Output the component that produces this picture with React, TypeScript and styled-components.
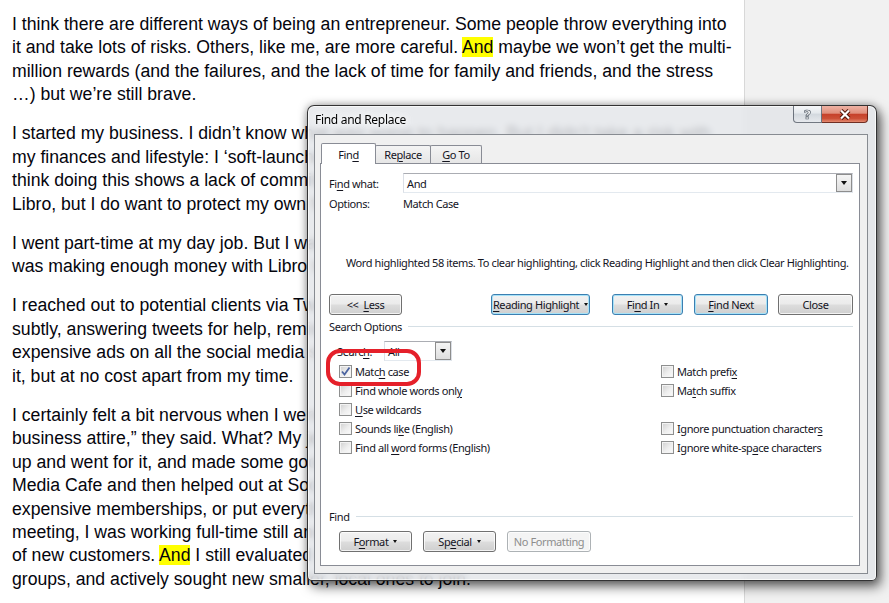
import styled, { createGlobalStyle } from 'styled-components';

const GlobalStyle = createGlobalStyle`
  html, body {
    margin: 0;
    padding: 0;
    background: #f1f1f1;
  }
  * {
    box-sizing: border-box;
  }
`;

const UI_FONT = `"Noto Sans", "Open Sans", sans-serif`;

// document behind the dialog

const Screen = styled.div`
  position: relative;
  width: 889px;
  height: 603px;
  overflow: hidden;
  display: flex;
  background: #f1f1f1;
`;

const Page = styled.div`
  width: 745px;
  flex: none;
  background: #fff;
  border-right: 1px solid #d8d8d8;
  padding: 13px 0 0 12px;
  overflow: hidden;
  font-family: "Liberation Sans", Arial, sans-serif;
  font-size: 17.65px;
  line-height: 23.4px;
  color: #05050d;
`;

const Paragraph = styled.p`
  margin: 0 0 15.8px;
`;

const Line = styled.span`
  display: block;
  white-space: nowrap;
`;

const Highlight = styled.span`
  background: #ffff00;
`;

// dialog window

const Window = styled.div`
  position: absolute;
  left: 307px;
  top: 105px;
  width: 570px;
  height: 476px;
  display: flex;
  flex-direction: column;
  padding: 0 8px 6px 6px;
  border: 1px solid rgba(20, 20, 20, 0.85);
  border-radius: 7px 7px 5px 5px;
  background: rgba(226, 229, 233, 0.8);
  backdrop-filter: blur(3px);
  box-shadow: inset 0 0 0 1px rgba(255, 255, 255, 0.7), 0 0 10px rgba(0, 0, 0, 0.35),
    4px 6px 12px rgba(0, 0, 0, 0.55);
  font-family: ${UI_FONT};
  font-size: 11px;
  letter-spacing: -0.4px;
  color: #14141e;
`;

const TitleBar = styled.div`
  height: 28px;
  flex: none;
  display: flex;
  align-items: flex-start;
`;

const Title = styled.div`
  margin: 6px 0 0 1px;
  font-size: 12px;
  letter-spacing: -0.3px;
  line-height: 16px;
  color: #000;
  text-shadow: 0 0 6px #fff, 0 0 10px #fff;
`;

const CaptionButtons = styled.div`
  margin-left: auto;
  display: flex;
`;

const HelpButton = styled.div`
  width: 29px;
  height: 17px;
  display: flex;
  align-items: center;
  justify-content: center;
  border: 1px solid rgba(70, 78, 90, 0.75);
  border-top: none;
  border-radius: 0 0 0 4px;
  background: linear-gradient(#f6f7f9 0%, #e4e8ec 45%, #d2d8de 50%, #e6e9ed 100%);
  font-family: "DejaVu Sans", sans-serif;
  font-size: 13px;
  font-weight: bold;
  letter-spacing: 0;
  color: #f4f4f4;
  -webkit-text-stroke: 0.7px #5a636e;
`;

const CloseButton = styled.div`
  width: 46px;
  height: 17px;
  display: flex;
  align-items: center;
  justify-content: center;
  border: 1px solid rgba(90, 25, 15, 0.85);
  border-top: none;
  border-left: none;
  border-radius: 0 0 4px 0;
  background: linear-gradient(#eeb2a4 0%, #e08f7c 45%, #c6412a 52%, #cc4f36 78%, #e48a70 100%);
`;

const Client = styled.div`
  flex: 1;
  display: flex;
  flex-direction: column;
  padding: 8px 7px 7px 5px;
  background: #f0f0f0;
  border: 1px solid rgba(90, 96, 104, 0.7);
`;

const Tabs = styled.div`
  height: 20px;
  display: flex;
  align-items: flex-end;
  padding-left: 1px;
  position: relative;
  z-index: 1;
`;

const Tab = styled.div<{ $active?: boolean; $w: number }>`
  width: ${({ $w }) => $w}px;
  height: ${({ $active }) => ($active ? 21 : 18)}px;
  margin-bottom: ${({ $active }) => ($active ? -1 : 0)}px;
  margin-left: ${({ $active }) => ($active ? 0 : -1)}px;
  padding-top: ${({ $active }) => ($active ? 1 : 0)}px;
  display: flex;
  align-items: center;
  justify-content: center;
  border: 1px solid #898c95;
  border-bottom: none;
  border-radius: 2px 2px 0 0;
  background: ${({ $active }) => ($active ? '#fff' : 'linear-gradient(#f4f4f4, #e6e6e6)')};
`;

const Panel = styled.div`
  flex: 1;
  display: flex;
  flex-direction: column;
  padding: 9px 6px 13px 8px;
  background: #fff;
  border: 1px solid #898c95;
`;

const Key = styled.span`
  text-decoration: underline;
  text-underline-offset: 2px;
`;

const FieldRow = styled.div<{ $mt?: number }>`
  display: flex;
  align-items: center;
  height: ${({ $mt }) => ($mt ? 16 : 20)}px;
  margin-top: ${({ $mt }) => $mt || 0}px;
`;

const FieldLabel = styled.div`
  width: 74px;
  flex: none;
`;

const FieldValue = styled.div`
  flex: 1;
`;

const Combo = styled.div<{ $w?: number }>`
  ${({ $w }) => ($w ? `width: ${$w}px; flex: none;` : 'flex: 1;')}
  height: 20px;
  display: flex;
  align-items: center;
  padding-left: 3px;
  background: #fff;
  border: 1px solid #dbdfe6;
  border-top-color: #abadb3;
  border-bottom-color: #e3e9ef;
`;

const ComboArrow = styled.div`
  width: 16px;
  height: 18px;
  margin-left: auto;
  display: flex;
  align-items: center;
  justify-content: center;
  border: 1px solid #8d8d8d;
  background: linear-gradient(#f5f5f5, #dedede);
`;

const Caret = styled.span<{ $size?: number }>`
  display: inline-block;
  width: 0;
  height: 0;
  border-left: ${({ $size }) => $size || 3}px solid transparent;
  border-right: ${({ $size }) => $size || 3}px solid transparent;
  border-top: ${({ $size }) => ($size || 3) + 1}px solid #111;
`;

const Message = styled.div`
  margin-top: 44px;
  padding-left: 17px;
  height: 16px;
  line-height: 16px;
  white-space: nowrap;
`;

const ButtonRow = styled.div<{ $mt: number; $pl?: number }>`
  display: flex;
  height: 21px;
  margin-top: ${({ $mt }) => $mt}px;
  padding-left: ${({ $pl }) => $pl || 0}px;
`;

type ButtonKind = 'normal' | 'focus' | 'disabled';

const Button = styled.div<{ $kind?: ButtonKind; $w: number; $gap?: number }>`
  width: ${({ $w }) => $w}px;
  height: 21px;
  margin-left: ${({ $gap }) => $gap || 0}px;
  display: flex;
  align-items: center;
  justify-content: center;
  gap: 5px;
  border-radius: 3px;
  white-space: nowrap;
  border: 1px solid
    ${({ $kind }) => ($kind === 'focus' ? '#3c7fb1' : $kind === 'disabled' ? '#adb2b5' : '#707070')};
  color: ${({ $kind }) => ($kind === 'disabled' ? '#8d8d8d' : '#14141e')};
  background: ${({ $kind }) =>
    $kind === 'disabled'
      ? '#f4f4f4'
      : 'linear-gradient(#f2f2f2 0%, #ebebeb 48%, #dddddd 52%, #cfcfcf 100%)'};
  box-shadow: inset 0 0 0 1px
    ${({ $kind }) => ($kind === 'focus' ? '#a6e2f8' : 'rgba(255, 255, 255, 0.75)')};
`;

const GroupHeading = styled.div<{ $mt: number }>`
  display: flex;
  align-items: center;
  gap: 6px;
  height: 16px;
  margin-top: ${({ $mt }) => $mt}px;

  &::after {
    content: '';
    flex: 1;
    height: 1px;
    background: #d5dfe5;
  }
`;

const SearchRow = styled.div`
  display: flex;
  align-items: center;
  height: 20px;
  margin-top: 7px;
  padding-left: 8px;
`;

const SearchLabel = styled.div`
  width: 47px;
`;

const OptionsGrid = styled.div`
  display: grid;
  grid-template-columns: 322px 1fr;
  grid-template-rows: repeat(5, 19px);
  grid-auto-flow: column;
  margin-top: 1px;
  padding-left: 10px;
`;

const CheckRow = styled.div`
  display: flex;
  align-items: center;
  gap: 3px;
`;

const CheckBox = styled.div`
  width: 13px;
  height: 13px;
  flex: none;
  display: flex;
  align-items: center;
  justify-content: center;
  border: 1px solid #8e8f8f;
  background: linear-gradient(135deg, #cfcfcf 0%, #eeeeee 55%, #fbfbfb 100%);
  box-shadow: inset 0 0 0 1px #f3f3f3;
`;

const Spacer = styled.div`
  flex: 1;
`;

const Annotation = styled.div`
  position: absolute;
  left: 326px;
  top: 349px;
  width: 95px;
  height: 37px;
  border: 4px solid #e5202a;
  border-radius: 14px;
`;

const paragraphs: string[][] = [
  [
    'I think there are different ways of being an entrepreneur. Some people throw everything into',
    'it and take lots of risks. Others, like me, are more careful. [And] maybe we won’t get the multi-',
    'million rewards (and the failures, and the lack of time for family and friends, and the stress',
    '…) but we’re still brave.',
  ],
  [
    'I started my business. I didn’t know what was going to happen. But I didn’t take a risk with',
    'my finances and lifestyle: I ‘soft-launched’ Libro while still working at my day job. I don’t',
    'think doing this shows a lack of commitment. I believe in myself and in',
    'Libro, but I do want to protect my own future and that of my family.',
  ],
  [
    'I went part-time at my day job. But I waited until I was sure that I',
    'was making enough money with Libro to make the leap.',
  ],
  [
    'I reached out to potential clients via Twitter and Facebook. I did it',
    'subtly, answering tweets for help, reminding people that I exist. I didn’t buy',
    'expensive ads on all the social media sites. I worked hard at',
    'it, but at no cost apart from my time.',
  ],
  [
    'I certainly felt a bit nervous when I went to my first networking event. “Wear',
    'business attire,” they said. What? My jeans and t-shirt are my business attire.',
    'up and went for it, and made some good contacts. I started attending Social',
    'Media Cafe and then helped out at Social Media Week. I didn’t join',
    'expensive memberships, or put everything into one group. At the first',
    'meeting, I was working full-time still and could only meet a handful',
    'of new customers. [And] I still evaluated which were the best',
    'groups, and actively sought new smaller, local ones to join.',
  ],
];

function renderLine(line: string) {
  return line
    .split(/\[(.+?)\]/)
    .map((part, i) => (i % 2 ? <Highlight key={i}>{part}</Highlight> : part));
}

// label split as [before, access key, after]
type Label = [string, string, string];

const options: ({ label: Label; checked?: boolean } | null)[] = [
  { label: ['Matc', 'h', ' case'], checked: true },
  { label: ['Find whole words onl', 'y', ''] },
  { label: ['', 'U', 'se wildcards'] },
  { label: ['Sounds li', 'k', 'e (English)'] },
  { label: ['Find all ', 'w', 'ord forms (English)'] },
  { label: ['Match prefi', 'x', ''] },
  { label: ['Ma', 't', 'ch suffix'] },
  null,
  { label: ['Ignore punctuation character', 's', ''] },
  { label: ['Ignore white-sp', 'a', 'ce characters'] },
];

function Labelled({ label }: { label: Label }) {
  return (
    <span>
      {label[0]}
      <Key>{label[1]}</Key>
      {label[2]}
    </span>
  );
}

function Check({ checked }: { checked?: boolean }) {
  return (
    <CheckBox>
      {checked && (
        <svg width="11" height="11" viewBox="0 0 11 11">
          <path d="M2 5.5 L4.5 8.5 L9.5 1.5" fill="none" stroke="#4b64a0" strokeWidth="1.8" />
        </svg>
      )}
    </CheckBox>
  );
}

function FindReplaceDialog() {
  return (
    <Window>
      <TitleBar>
        <Title>Find and Replace</Title>
        <CaptionButtons>
          <HelpButton>?</HelpButton>
          <CloseButton>
            <svg width="14" height="11" viewBox="0 0 14 11">
              <path d="M3 1.5 L11 9.5 M11 1.5 L3 9.5" stroke="#4a1208" strokeWidth="4" />
              <path d="M3 1.5 L11 9.5 M11 1.5 L3 9.5" stroke="#fff" strokeWidth="2.2" />
            </svg>
          </CloseButton>
        </CaptionButtons>
      </TitleBar>

      <Client>
        <Tabs>
          <Tab $active $w={55}>
            <Labelled label={['Fin', 'd', '']} />
          </Tab>
          <Tab $w={56}>
            <Labelled label={['Re', 'p', 'lace']} />
          </Tab>
          <Tab $w={52}>
            <Labelled label={['', 'G', 'o To']} />
          </Tab>
        </Tabs>

        <Panel>
          <FieldRow>
            <FieldLabel>
              <Labelled label={['Fi', 'n', 'd what:']} />
            </FieldLabel>
            <Combo>
              And
              <ComboArrow>
                <Caret $size={3.5} />
              </ComboArrow>
            </Combo>
          </FieldRow>
          <FieldRow $mt={2}>
            <FieldLabel>Options:</FieldLabel>
            <FieldValue>Match Case</FieldValue>
          </FieldRow>

          <Message>
            Word highlighted 58 items. To clear highlighting, click Reading Highlight and then click
            Clear Highlighting.
          </Message>

          <ButtonRow $mt={23}>
            <Button $w={73}>
              {'<< '}
              <Labelled label={['', 'L', 'ess']} />
            </Button>
            <Button $kind="focus" $w={99} $gap={89}>
              <Labelled label={['', 'R', 'eading Highlight']} />
              <Caret $size={2.5} />
            </Button>
            <Button $kind="focus" $w={71} $gap={22}>
              <Labelled label={['Fi', 'n', 'd In']} />
              <Caret $size={2.5} />
            </Button>
            <Button $kind="focus" $w={74} $gap={11}>
              <Labelled label={['', 'F', 'ind Next']} />
            </Button>
            <Button $w={75} $gap={10}>
              Close
            </Button>
          </ButtonRow>

          <GroupHeading $mt={3}>Search Options</GroupHeading>
          <SearchRow>
            <SearchLabel>
              <Labelled label={['Searc', 'h', ':']} />
            </SearchLabel>
            <Combo $w={68}>
              All
              <ComboArrow>
                <Caret $size={3.5} />
              </ComboArrow>
            </Combo>
          </SearchRow>

          <OptionsGrid>
            {options.map((opt, i) =>
              opt ? (
                <CheckRow key={i}>
                  <Check checked={opt.checked} />
                  <Labelled label={opt.label} />
                </CheckRow>
              ) : (
                <div key={i} />
              ),
            )}
          </OptionsGrid>

          <Spacer />

          <GroupHeading $mt={0}>Find</GroupHeading>
          <ButtonRow $mt={7} $pl={10}>
            <Button $w={73}>
              <Labelled label={['F', 'o', 'rmat']} />
              <Caret $size={2.5} />
            </Button>
            <Button $w={73} $gap={11}>
              <Labelled label={['Sp', 'e', 'cial']} />
              <Caret $size={2.5} />
            </Button>
            <Button $kind="disabled" $w={84} $gap={11}>
              No Formatting
            </Button>
          </ButtonRow>
        </Panel>
      </Client>
    </Window>
  );
}

export default function App() {
  return (
    <>
      <GlobalStyle />
      <Screen>
        <Page>
          {paragraphs.map((lines, p) => (
            <Paragraph key={p}>
              {lines.map((line, i) => (
                <Line key={i}>{renderLine(line)}</Line>
              ))}
            </Paragraph>
          ))}
        </Page>
        <FindReplaceDialog />
        <Annotation />
      </Screen>
    </>
  );
}
